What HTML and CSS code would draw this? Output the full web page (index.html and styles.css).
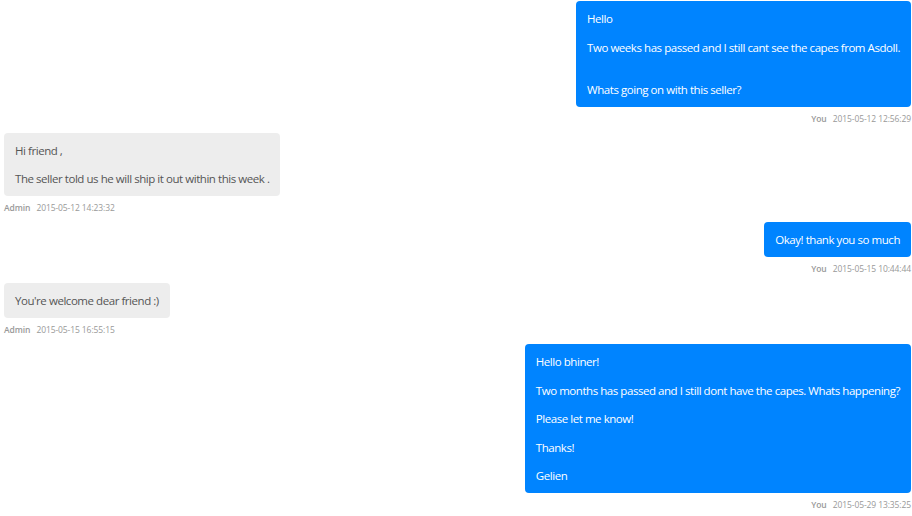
FILE: index.html
```html
<!DOCTYPE html>
<html lang="en">
<head>
  <meta charset="UTF-8">
  <meta name="viewport" content="width=device-width, initial-scale=1.0">
  <title>Messages</title>
  <link rel="stylesheet" href="styles.css">
</head>
<body>
  <div class="thread">

    <!-- message from the buyer -->
    <div class="msg msg-you">
      <div class="bubble">
        <p>Hello</p>
        <p class="gap">Two weeks has passed and I still cant see the capes from Asdoll.</p>
        <p>Whats going on with this seller?</p>
      </div>
      <div class="meta"><b>You</b> 2015-05-12 12:56:29</div>
    </div>

    <div class="msg msg-admin">
      <div class="bubble">
        <p>Hi friend ,</p>
        <p>The seller told us he will ship it out within this week .</p>
      </div>
      <div class="meta"><b>Admin</b> 2015-05-12 14:23:32</div>
    </div>

    <div class="msg msg-you">
      <div class="bubble">
        <p>Okay! thank you so much</p>
      </div>
      <div class="meta"><b>You</b> 2015-05-15 10:44:44</div>
    </div>

    <div class="msg msg-admin">
      <div class="bubble">
        <p>You're welcome dear friend :)</p>
      </div>
      <div class="meta"><b>Admin</b> 2015-05-15 16:55:15</div>
    </div>

    <div class="msg msg-you">
      <div class="bubble">
        <p>Hello bhiner!</p>
        <p>Two months has passed and I still dont have the capes. Whats happening?</p>
        <p>Please let me know!</p>
        <p>Thanks!</p>
        <p>Gelien</p>
      </div>
      <div class="meta"><b>You</b> 2015-05-29 13:35:25</div>
    </div>

  </div>
</body>
</html>
```

FILE: styles.css
```css
body {
  margin: 0;
  font-family: "Open Sans", Arial, sans-serif;
  background: #fff;
}
.thread {
  display: flex;
  flex-direction: column;
  padding: 1px 1px 0 4px;
}
.msg {
  display: flex;
  flex-direction: column;
  margin-bottom: 9px;
}
.msg-you {
  align-items: flex-end;
}
.msg-admin {
  align-items: flex-start;
}
.bubble {
  padding: 10px 11px;
  border-radius: 4px;
  font-size: 11.5px;
  line-height: 15px;
  letter-spacing: -0.45px;
}
.bubble p {
  margin: 0 0 13.5px;
}
.bubble p.gap {
  margin-bottom: 27px;
}
.bubble p:last-child {
  margin-bottom: 0;
}
.msg-you .bubble {
  background-color: #0084ff;
  color: #fff;
}
.msg-admin .bubble {
  background-color: #ededed;
  color: #555;
}
.meta {
  margin-top: 6px;
  font-size: 8.5px;
  line-height: 11px;
  letter-spacing: -0.1px;
  color: #999;
}
.meta b {
  font-weight: 600;
  margin-right: 4px;
}
```
